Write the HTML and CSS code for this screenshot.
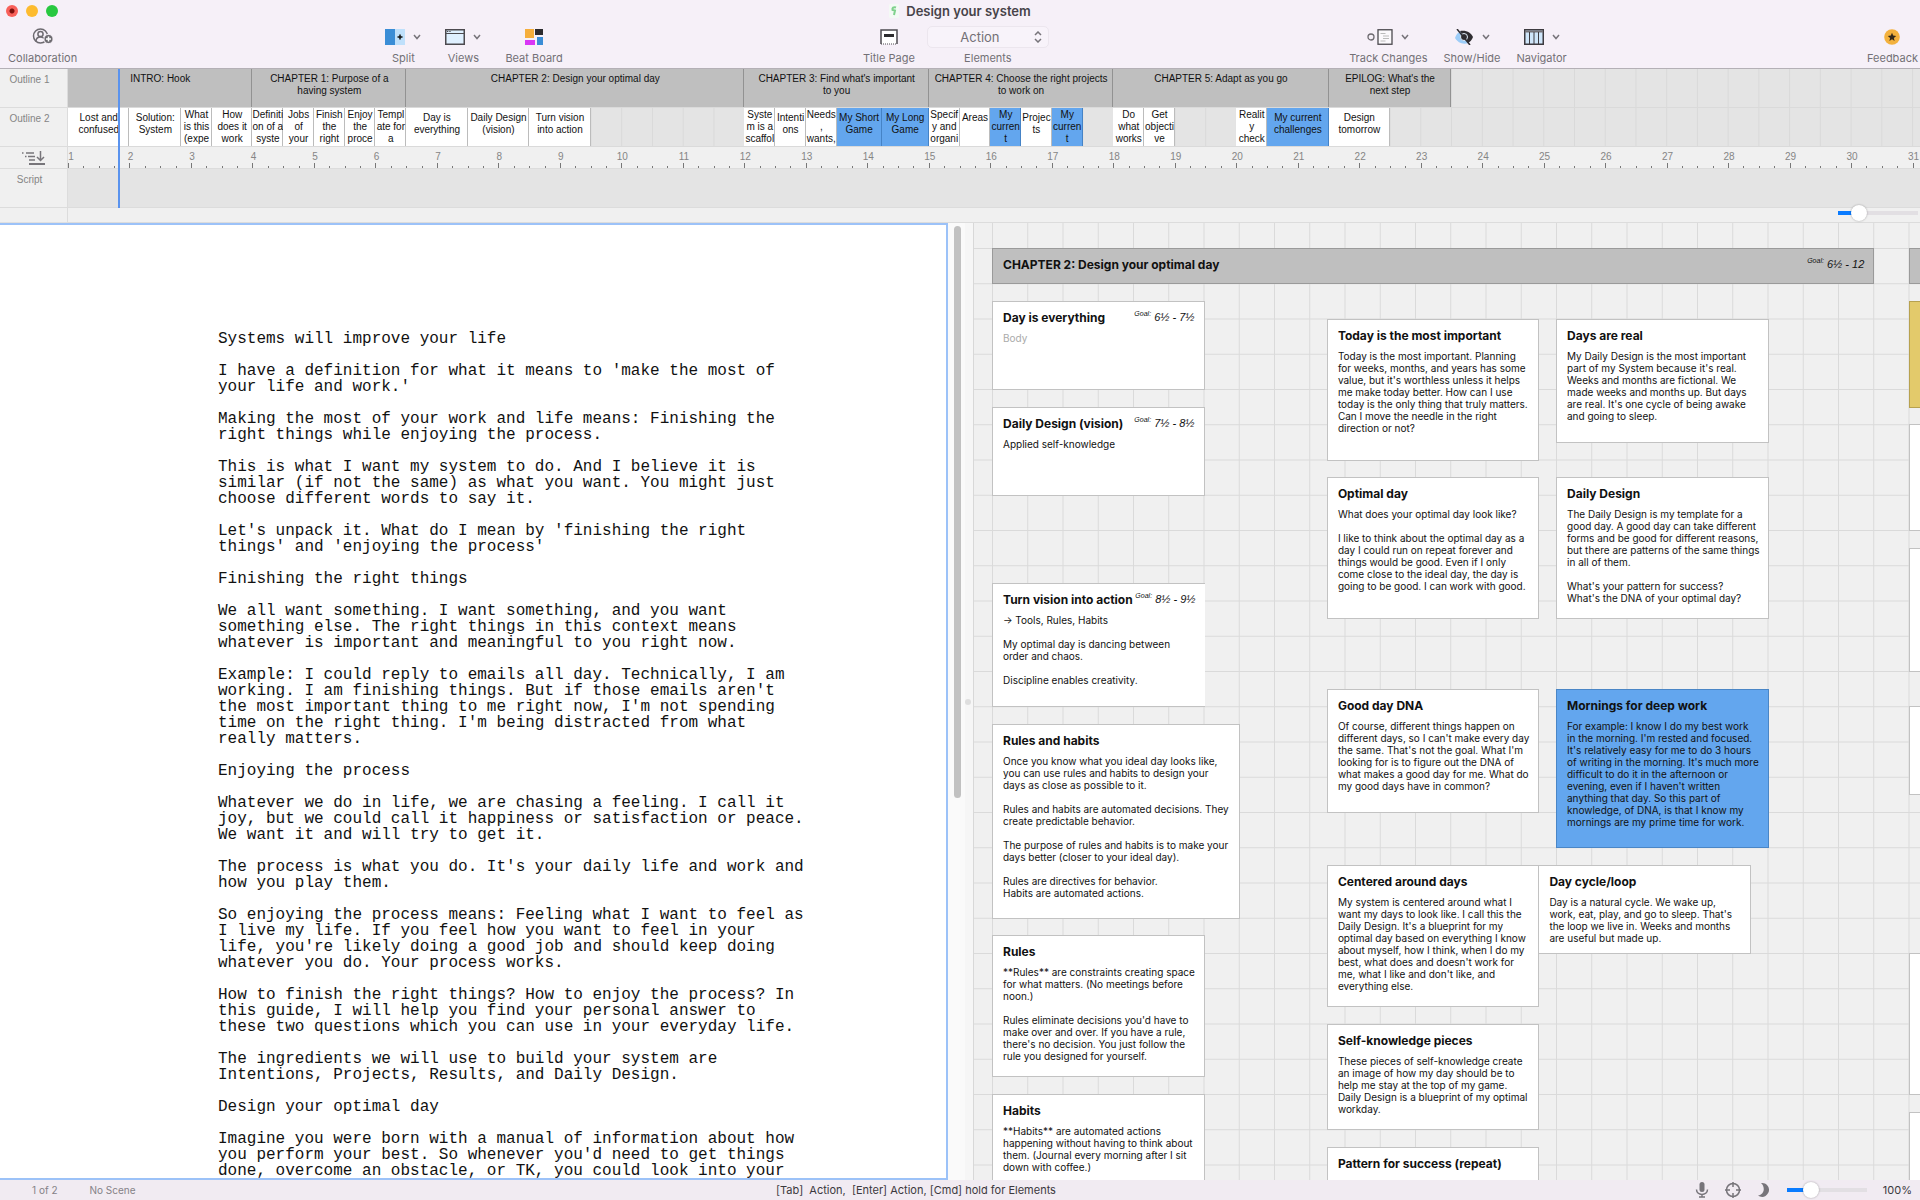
FILE: index.html
```
<!DOCTYPE html>
<html lang="en">
<head>
  <meta charset="utf-8">
  <title>Design your system</title>
  <link rel="stylesheet" href="styles.css">
</head>
<body>
  <header class="toolbar">
    <div class="titlebar">
      <div class="lights">
        <button class="light red" aria-label="Close"></button>
        <button class="light yellow" aria-label="Minimize"></button>
        <button class="light green" aria-label="Zoom"></button>
      </div>
      <svg class="doc-icon" width="10" height="14" viewBox="0 0 10 14"><rect width="10" height="14" rx="1" fill="#f4faf5"/><path d="M7 3.500C4.500 2.500 3 4 3.500 6L6 6.500 5 11" fill="none" stroke="#7fd18c" stroke-width="2"/></svg>
      <h1 class="title">Design your system</h1>
    </div>

    <div class="tools">
      <button class="tool collaboration">
        <span class="tool-icon">
          <svg width="22" height="20" viewBox="0 0 22 20" fill="none" stroke="#6d6a70" stroke-width="1.500"><circle cx="8.500" cy="9" r="7"/><circle cx="8.500" cy="7" r="2.600"/><path d="M4 14.500c0-3 1.800-4.500 4.500-4.500 1.500 0 2.700.5 3.500 1.500"/><circle cx="16.500" cy="12" r="4.600" fill="#6d6a70" stroke="#f6f0f8" stroke-width="1"/><path d="M16.500 9.500v5M14 12h5" stroke="#fff"/></svg>
        </span>
        <span>Collaboration</span>
      </button>

      <div class="tool-group wide">
        <button class="tool">
          <span class="tool-icon">
            <svg width="20" height="16" viewBox="0 0 20 16"><rect width="10" height="16" fill="#3a8dd6"/><rect x="10" width="10" height="16" fill="#bfe0fb"/><path d="M15 5.500v5M12.500 8h5" stroke="#111" stroke-width="1.500"/></svg>
            <svg class="chevron" width="8" height="6" viewBox="0 0 8 6"><path d="M1 1l3 3.500L7 1"/></svg>
          </span>
          <span>Split</span>
        </button>
        <button class="tool">
          <span class="tool-icon">
            <svg width="20" height="16" viewBox="0 0 20 16"><rect x=".75" y=".75" width="18.500" height="14.500" fill="#dff0ff" stroke="#4c4a4f" stroke-width="1.500"/><path d="M1 4.500h18" stroke="#4c4a4f"/><path d="M2 2.500h4" stroke="#4c4a4f" stroke-dasharray="1 .7"/></svg>
            <svg class="chevron" width="8" height="6" viewBox="0 0 8 6"><path d="M1 1l3 3.500L7 1"/></svg>
          </span>
          <span>Views</span>
        </button>
        <button class="tool">
          <span class="tool-icon">
            <svg width="18" height="16" viewBox="0 0 18 16"><rect width="9" height="9" fill="#f5ae3c"/><rect x="10" width="8" height="6" fill="#2c2b2e"/><rect y="11" width="10" height="5" fill="#d936f5"/><rect x="12" y="8" width="6" height="8" fill="#3a8dd6"/></svg>
          </span>
          <span>Beat Board</span>
        </button>
      </div>

      <div class="tool-group narrow">
        <button class="tool">
          <span class="tool-icon">
            <svg width="18" height="16" viewBox="0 0 18 16"><path d="M1 15V1h16v14" fill="#fff" stroke="#4c4a4f" stroke-width="1.500"/><path d="M1 15h16" stroke="#4c4a4f" stroke-dasharray="1 1"/><rect x="4" y="5" width="10" height="3" fill="#2c2b2e"/></svg>
          </span>
          <span>Title Page</span>
        </button>
        <div class="tool">
          <div class="select-wrap">
            <select id="elements" class="elements-select"><option>Action</option></select>
            <svg class="updown" width="8" height="12" viewBox="0 0 8 12"><path d="M1 4l3-3 3 3M1 8l3 3 3-3"/></svg>
          </div>
          <label for="elements">Elements</label>
        </div>
      </div>

      <div class="tool-group">
        <button class="tool">
          <span class="tool-icon">
            <svg width="26" height="16" viewBox="0 0 26 16" fill="none"><rect x="1" y="5" width="6" height="6" rx="3" stroke="#6d6a70" stroke-width="1.300"/><rect x="11" y=".75" width="14" height="14.500" fill="#fbf9fc" stroke="#4c4a4f" stroke-width="1.300"/><path d="M13.500 4.500h5M16 7h6M16 9.500h6M13.500 12h5" stroke="#bbb"/></svg>
            <svg class="chevron" width="8" height="6" viewBox="0 0 8 6"><path d="M1 1l3 3.500L7 1"/></svg>
          </span>
          <span>Track Changes</span>
        </button>
        <button class="tool">
          <span class="tool-icon">
            <svg width="20" height="16" viewBox="0 0 20 16"><path d="M1 9C3 3.500 6 2 10 2l5 12c-7 2-11-.5-14-5z" fill="#9dcdf8"/><path d="M6 2c7-1 11 2 13 6-1 3-3 5-5 6z" fill="#2f2d31"/><circle cx="10" cy="8" r="3.500" fill="#2f2d31" stroke="#e6f2fd" stroke-width="1"/><path d="M3 0l13 16" stroke="#2f2d31" stroke-width="1.500"/></svg>
            <svg class="chevron" width="8" height="6" viewBox="0 0 8 6"><path d="M1 1l3 3.500L7 1"/></svg>
          </span>
          <span>Show/Hide</span>
        </button>
        <button class="tool">
          <span class="tool-icon">
            <svg width="20" height="16" viewBox="0 0 20 16"><rect x=".75" y=".75" width="18.500" height="14.500" fill="#cfe6fa" stroke="#3d3b40" stroke-width="1.500"/><path d="M1 2.500h18" stroke="#77757a" stroke-width="2"/><path d="M5.500 3v12M10 3v12M14.500 3v12" stroke="#3d3b40"/></svg>
            <svg class="chevron" width="8" height="6" viewBox="0 0 8 6"><path d="M1 1l3 3.500L7 1"/></svg>
          </span>
          <span>Navigator</span>
        </button>
      </div>

      <button class="tool">
        <span class="tool-icon">
          <svg width="16" height="16" viewBox="0 0 16 16"><circle cx="8" cy="8" r="7.800" fill="#f3b13d"/><path d="M8 3.800l1.200 2.800 3 .3-2.300 2 .7 3L8 10.300l-2.600 1.600.7-3-2.300-2 3-.3z" fill="#33291a"/></svg>
        </span>
        <span>Feedback</span>
      </button>
    </div>
  </header>

  <section class="timeline">
    <div class="row-label">Outline 1</div>
    <div class="track lanes">
      <div class="chapter" style="flex-grow: 3">INTRO: Hook</div>
      <div class="chapter" style="flex-grow: 2.5">CHAPTER 1: Purpose of a<br>having system</div>
      <div class="chapter" style="flex-grow: 5.5">CHAPTER 2: Design your optimal day</div>
      <div class="chapter" style="flex-grow: 3">CHAPTER 3: Find what's important<br>to you</div>
      <div class="chapter" style="flex-grow: 3">CHAPTER 4: Choose the right projects<br>to work on</div>
      <div class="chapter" style="flex-grow: 3.5">CHAPTER 5: Adapt as you go</div>
      <div class="chapter" style="flex-grow: 2">EPILOG: What's the<br>next step</div>
      <div class="empty" style="flex-grow: 7.62"></div>
    </div>

    <div class="row-label">Outline 2</div>
    <div class="track lanes">
      <div class="beat" style="flex-grow: 1">Lost and<br>confused</div>
      <div class="beat" style="flex-grow: 0.84">Solution:<br>System</div>
      <div class="beat tall" style="flex-grow: 0.5">What<br>is this<br>(expe</div>
      <div class="beat tall" style="flex-grow: 0.66">How<br>does it<br>work</div>
      <div class="beat tall" style="flex-grow: 0.5">Definiti<br>on of a<br>syste</div>
      <div class="beat tall" style="flex-grow: 0.5">Jobs<br>of<br>your</div>
      <div class="beat tall" style="flex-grow: 0.5">Finish<br>the<br>right</div>
      <div class="beat tall" style="flex-grow: 0.5">Enjoy<br>the<br>proce</div>
      <div class="beat tall" style="flex-grow: 0.5">Templ<br>ate for<br>a</div>
      <div class="beat" style="flex-grow: 1">Day is<br>everything</div>
      <div class="beat" style="flex-grow: 1">Daily Design<br>(vision)</div>
      <div class="beat" style="flex-grow: 1">Turn vision<br>into action</div>
      <div class="empty" style="flex-grow: 2.5"></div>
      <div class="beat tall" style="flex-grow: 0.5">Syste<br>m is a<br>scaffol</div>
      <div class="beat" style="flex-grow: 0.5">Intenti<br>ons</div>
      <div class="beat tall" style="flex-grow: 0.5">Needs<br>,<br>wants,</div>
      <div class="beat blue" style="flex-grow: 0.73">My Short<br>Game</div>
      <div class="beat blue" style="flex-grow: 0.77">My Long<br>Game</div>
      <div class="beat tall" style="flex-grow: 0.5">Specif<br>y and<br>organi</div>
      <div class="beat" style="flex-grow: 0.5">Areas</div>
      <div class="beat tall blue" style="flex-grow: 0.5">My<br>curren<br>t</div>
      <div class="beat" style="flex-grow: 0.5">Projec<br>ts</div>
      <div class="beat tall blue" style="flex-grow: 0.5">My<br>curren<br>t</div>
      <div class="empty" style="flex-grow: 0.5"></div>
      <div class="beat tall" style="flex-grow: 0.5">Do<br>what<br>works</div>
      <div class="beat tall" style="flex-grow: 0.5">Get<br>objecti<br>ve</div>
      <div class="empty" style="flex-grow: 1"></div>
      <div class="beat tall" style="flex-grow: 0.5">Realit<br>y<br>check</div>
      <div class="beat blue" style="flex-grow: 1">My current<br>challenges</div>
      <div class="beat" style="flex-grow: 1">Design<br>tomorrow</div>
      <div class="empty" style="flex-grow: 8.62"></div>
    </div>

    <div class="row-label icon-label">
      <svg width="24" height="16" viewBox="0 0 24 16" fill="none" stroke="#77757a" stroke-width="1.500"><path d="M0 3h1.500M4 3h8M3 6.500h1.500M6 6.500h7M7 10h6"/><path d="M18.500 1v9M15 7l3.500 3.500L22 7"/><path d="M7 14h16" stroke-width="2"/></svg>
    </div>
    <div class="track ruler" id="ruler"></div>

    <div class="row-label">Script</div>
    <div class="track script-track"></div>

    <div class="row-label last"></div>
    <div class="zoom-strip">
      <input class="slider" type="range" min="0" max="100" value="20" aria-label="Timeline zoom">
    </div>
    <div class="playhead"></div>
  </section>

  <main class="workspace">
    <article class="script">
      <p>Systems will improve your life</p>
      <p>I have a definition for what it means to 'make the most of<br>your life and work.'</p>
      <p>Making the most of your work and life means: Finishing the<br>right things while enjoying the process.</p>
      <p>This is what I want my system to do. And I believe it is<br>similar (if not the same) as what you want. You might just<br>choose different words to say it.</p>
      <p>Let's unpack it. What do I mean by 'finishing the right<br>things' and 'enjoying the process'</p>
      <p>Finishing the right things</p>
      <p>We all want something. I want something, and you want<br>something else. The right things in this context means<br>whatever is important and meaningful to you right now.</p>
      <p>Example: I could reply to emails all day. Technically, I am<br>working. I am finishing things. But if those emails aren't<br>the most important thing to me right now, I'm not spending<br>time on the right thing. I'm being distracted from what<br>really matters.</p>
      <p>Enjoying the process</p>
      <p>Whatever we do in life, we are chasing a feeling. I call it<br>joy, but we could call it happiness or satisfaction or peace.<br>We want it and will try to get it.</p>
      <p>The process is what you do. It's your daily life and work and<br>how you play them.</p>
      <p>So enjoying the process means: Feeling what I want to feel as<br>I live my life. If you feel how you want to feel in your<br>life, you're likely doing a good job and should keep doing<br>whatever you do. Your process works.</p>
      <p>How to finish the right things? How to enjoy the process? In<br>this guide, I will help you find your personal answer to<br>these two questions which you can use in your everyday life.</p>
      <p>The ingredients we will use to build your system are<br>Intentions, Projects, Results, and Daily Design.</p>
      <p>Design your optimal day</p>
      <p>Imagine you were born with a manual of information about how<br>you perform your best. So whenever you'd need to get things<br>done, overcome an obstacle, or TK, you could look into your</p>
    </article>
    <div class="scrollbar"><div class="thumb"></div></div>
    <div class="splitter"><span class="grip"></span></div>

    <!-- --x, --y, --w, --h are in board cells -->
    <section class="board">
      <div class="canvas">
        <div class="card heading" style="--x:0; --y:0; --w:25; --h:1">
          <div class="card-head"><h2>CHAPTER 2: Design your optimal day</h2><span class="goal"><sup>Goal:</sup> 6½ - 12</span></div>
        </div>
        <div class="card" style="--x:0; --y:1.5; --w:6; --h:2.5">
          <div class="card-head"><h2>Day is everything</h2><span class="goal"><sup>Goal:</sup> 6½ - 7½</span></div>
          <p class="placeholder">Body</p>
        </div>
        <div class="card" style="--x:0; --y:4.5; --w:6; --h:2.5">
          <div class="card-head"><h2>Daily Design (vision)</h2><span class="goal"><sup>Goal:</sup> 7½ - 8½</span></div>
          <p>Applied self-knowledge</p>
        </div>
        <div class="card open" style="--x:0; --y:9.5; --w:6; --h:3.5">
          <div class="card-head"><h2>Turn vision into action</h2><span class="goal"><sup>Goal:</sup> 8½ - 9½</span></div>
          <p>→ Tools, Rules, Habits<br><br>My optimal day is dancing between<br>order and chaos.<br><br>Discipline enables creativity.</p>
        </div>
        <div class="card" style="--x:0; --y:13.5; --w:7; --h:5.5">
          <h2>Rules and habits</h2>
          <p>Once you know what you ideal day looks like,<br>you can use rules and habits to design your<br>days as close as possible to it.<br><br>Rules and habits are automated decisions. They<br>create predictable behavior.<br><br>The purpose of rules and habits is to make your<br>days better (closer to your ideal day).<br><br>Rules are directives for behavior.<br>Habits are automated actions.</p>
        </div>
        <div class="card" style="--x:0; --y:19.5; --w:6; --h:4">
          <h2>Rules</h2>
          <p>**Rules** are constraints creating space<br>for what matters. (No meetings before<br>noon.)<br><br>Rules eliminate decisions you'd have to<br>make over and over. If you have a rule,<br>there's no decision. You just follow the<br>rule you designed for yourself.</p>
        </div>
        <div class="card" style="--x:0; --y:24; --w:6; --h:3.5">
          <h2>Habits</h2>
          <p>**Habits** are automated actions<br>happening without having to think about<br>them. (Journal every morning after I sit<br>down with coffee.)</p>
        </div>

        <div class="card" style="--x:9.5; --y:2; --w:6; --h:4">
          <h2>Today is the most important</h2>
          <p>Today is the most important. Planning<br>for weeks, months, and years has some<br>value, but it's worthless unless it helps<br>me make today better. How can I use<br>today is the only thing that truly matters.<br>Can I move the needle in the right<br>direction or not?</p>
        </div>
        <div class="card" style="--x:16; --y:2; --w:6; --h:3.5">
          <h2>Days are real</h2>
          <p>My Daily Design is the most important<br>part of my System because it's real.<br>Weeks and months are fictional. We<br>made weeks and months up. But days<br>are real. It's one cycle of being awake<br>and going to sleep.</p>
        </div>
        <div class="card" style="--x:9.5; --y:6.5; --w:6; --h:4">
          <h2>Optimal day</h2>
          <p>What does your optimal day look like?<br><br>I like to think about the optimal day as a<br>day I could run on repeat forever and<br>things would be good. Even if I only<br>come close to the ideal day, the day is<br>going to be good. I can work with good.</p>
        </div>
        <div class="card" style="--x:16; --y:6.5; --w:6; --h:4">
          <h2>Daily Design</h2>
          <p>The Daily Design is my template for a<br>good day. A good day can take different<br>forms and be good for different reasons,<br>but there are patterns of the same things<br>in all of them.<br><br>What's your pattern for success?<br>What's the DNA of your optimal day?</p>
        </div>
        <div class="card" style="--x:9.5; --y:12.5; --w:6; --h:3.5">
          <h2>Good day DNA</h2>
          <p>Of course, different things happen on<br>different days, so I can't make every day<br>the same. That's not the goal. What I'm<br>looking for is to figure out the DNA of<br>what makes a good day for me. What do<br>my good days have in common?</p>
        </div>
        <div class="card blue" style="--x:16; --y:12.5; --w:6; --h:4.5">
          <h2>Mornings for deep work</h2>
          <p>For example: I know I do my best work<br>in the morning. I'm rested and focused.<br>It's relatively easy for me to do 3 hours<br>of writing in the morning. It's much more<br>difficult to do it in the afternoon or<br>evening, even if I haven't written<br>anything that day. So this part of<br>knowledge, of DNA, is that I know my<br>mornings are my prime time for work.</p>
        </div>
        <div class="card" style="--x:9.5; --y:17.5; --w:6; --h:4">
          <h2>Centered around days</h2>
          <p>My system is centered around what I<br>want my days to look like. I call this the<br>Daily Design. It's a blueprint for my<br>optimal day based on everything I know<br>about myself, how I think, when I do my<br>best, what does and doesn't work for<br>me, what I like and don't like, and<br>everything else.</p>
        </div>
        <div class="card" style="--x:15.5; --y:17.5; --w:6; --h:2.5">
          <h2>Day cycle/loop</h2>
          <p>Day is a natural cycle. We wake up,<br>work, eat, play, and go to sleep. That's<br>the loop we live in. Weeks and months<br>are useful but made up.</p>
        </div>
        <div class="card" style="--x:9.5; --y:22; --w:6; --h:3">
          <h2>Self-knowledge pieces</h2>
          <p>These pieces of self-knowledge create<br>an image of how my day should be to<br>help me stay at the top of my game.<br>Daily Design is a blueprint of my optimal<br>workday.</p>
        </div>
        <div class="card" style="--x:9.5; --y:25.5; --w:6; --h:3.5">
          <h2>Pattern for success (repeat)</h2>
        </div>

        <!-- next chapter, cut off by the window edge -->
        <div class="card heading" style="--x:26; --y:0; --w:25; --h:1"></div>
        <div class="card gold" style="--x:26; --y:1.5; --w:6; --h:3"></div>
        <div class="card" style="--x:26; --y:5; --w:6; --h:3"></div>
        <div class="card" style="--x:26; --y:8.5; --w:6; --h:3.5"></div>
        <div class="card" style="--x:26; --y:13; --w:6; --h:2.5"></div>
        <div class="card" style="--x:26; --y:20; --w:6; --h:4"></div>
        <div class="card" style="--x:26; --y:24.5; --w:6; --h:4"></div>
      </div>
    </section>
  </main>

  <footer class="statusbar">
    <div class="status-left"><span>1 of 2</span><span>No Scene</span></div>
    <div class="status-hint">[Tab]&nbsp; Action,&nbsp; [Enter] Action, [Cmd] hold for Elements</div>
    <div class="status-right">
      <button class="status-button" aria-label="Dictation"><svg width="14" height="16" viewBox="0 0 14 16" fill="none" stroke="#77747a" stroke-width="1.500"><rect x="4.500" y="0" width="5" height="10" rx="2.500" fill="#77747a" stroke="none"/><path d="M1.500 7.500c0 6.500 11 6.500 11 0M7 12.500V15M4 15h6"/></svg></button>
      <button class="status-button" aria-label="Focus"><svg width="16" height="16" viewBox="0 0 16 16" fill="none" stroke="#77747a" stroke-width="1.500"><circle cx="8" cy="8" r="6.500"/><path d="M8 0v5M8 11v5M0 8h5M11 8h5"/></svg></button>
      <button class="status-button" aria-label="Night mode"><svg width="14" height="16" viewBox="0 0 14 16"><path d="M4 1c8-1 11 9 4.500 13-2.500 1.500-5.500 1-7.500-.5C7.500 12.500 8.500 5 4 1z" fill="#77747a"/></svg></button>
      <input class="slider" type="range" min="0" max="100" value="25" aria-label="Page zoom">
      <span class="zoom-value">100%</span>
    </div>
  </footer>

  <script>
    // Ruler: one unit per page, four ticks in each
    const ruler = document.getElementById('ruler');
    for (let page = 1; page <= 31; page++) {
      const unit = document.createElement('div');
      unit.className = 'unit';
      unit.style.flexGrow = page === 31 ? 0.12 : 1;
      let ticks = '<i class="tick major"></i>';
      if (page < 31) {
        ticks += '<i class="tick"></i>'.repeat(3);
      }
      unit.innerHTML = '<span class="number">' + page + '</span><div class="ticks">' + ticks + '</div>';
      ruler.appendChild(unit);
    }
  </script>
</body>
</html>
```
FILE: styles.css
```
* {
  box-sizing: border-box;
}

body {
  margin: 0;
  height: 100vh;
  display: flex;
  flex-direction: column;
  overflow: hidden;
  font-family: Inter, sans-serif;
  font-size: 11px;
  background-color: #f0f0f0;
  color: #111;
}

button {
  padding: 0;
  border: none;
  background: none;
  font: inherit;
  color: inherit;
}

h1, h2, p {
  margin: 0;
}

svg {
  display: block;
}

/* Toolbar */
.toolbar {
  background-color: #f6f0f8;
  border-bottom: 1px solid #b4b0b6;
  padding-bottom: 3px;
}

.titlebar {
  height: 22px;
  display: flex;
  align-items: center;
  justify-content: center;
  gap: 7px;
  position: relative;
}

.lights {
  position: absolute;
  left: 6px;
  top: 5px;
  display: flex;
  gap: 8px;
}

.light {
  width: 12px;
  height: 12px;
  border-radius: 50%;
}

.red {
  background: radial-gradient(circle, #7c0f0c 2px, #f8605a 3px);
}

.yellow {
  background-color: #fdbb2f;
}

.green {
  background-color: #28c840;
}

.title {
  font-size: 13px;
  line-height: 16px;
  font-weight: 600;
  color: #474349;
}

.tools {
  display: flex;
  justify-content: space-between;
  padding: 4px 2px 0 8px;
}

.tool-group {
  display: flex;
  gap: 16px;
}

.tool-group.wide {
  gap: 24px;
}

.tool-group.narrow {
  gap: 12px;
}

.collaboration {
  margin-right: 8px;
}

.tool {
  display: flex;
  flex-direction: column;
  align-items: center;
  gap: 3px;
  line-height: 14px;
  color: #737076;
}

.tool-icon {
  height: 22px;
  display: flex;
  align-items: center;
  gap: 8px;
}

.chevron, .updown {
  fill: none;
  stroke: #77747a;
  stroke-width: 1.5px;
}

.select-wrap {
  position: relative;
}

.elements-select {
  appearance: none;
  display: block;
  width: 122px;
  height: 22px;
  border: 1px solid #ece6ee;
  border-radius: 5px;
  background-color: #f8f3fa;
  padding: 0 16px 0 0;
  font: 13px Inter, sans-serif;
  color: #737076;
  text-align: center;
  text-align-last: center;
}

.updown {
  position: absolute;
  right: 7px;
  top: 5px;
}

/* Timeline */
.timeline {
  display: grid;
  grid-template-columns: 68px 1fr;
  grid-template-rows: 39px 39px 22px 39px 15px;
  position: relative;
  font-family: "Liberation Sans", sans-serif;
  font-size: 10px;
  line-height: 12px;
}

.row-label {
  padding: 5px 8px 0 0;
  text-align: center;
  color: #858585;
  background-color: #f0f0f0;
  border-right: 1px solid #dcdcdc;
  border-bottom: 1px solid #dcdcdc;
}

.icon-label {
  display: flex;
  justify-content: center;
  padding: 3px 0 0;
}

.last {
  border-bottom-color: #e0e0e0;
}

.track {
  min-width: 0;
  overflow: hidden;
  background-color: #e4e4e4;
}

.lanes {
  display: flex;
  border-bottom: 1px solid #dadada;
  background-image: linear-gradient(90deg, #d9d9d9 1px, transparent 1px);
  background-size: calc(100% / 60.24) 100%;
}

.chapter, .beat, .empty {
  flex: 1 1 0;
  min-width: 0;
  overflow: hidden;
  white-space: nowrap;
}

/* dividers are inset shadows so they take no width from the scale */
.chapter, .beat {
  display: flex;
  justify-content: center;
  text-align: center;
  padding-top: 4px;
  box-shadow: inset -1px 0 #bcbcbc;
}

.chapter {
  margin-bottom: -1px;
  background-color: #bfbfbf;
  box-shadow: inset -1px 0 #929292;
}

.beat {
  background-color: #fff;
}

.tall {
  padding-top: 1px;
}

.beat.blue {
  background-color: #63a6ee;
  box-shadow: inset -1px 0 #4583c6;
}

.ruler {
  display: flex;
  background-color: #f0f0f0;
  border-bottom: 1px solid #dcdcdc;
}

.unit {
  flex: 1 1 0;
  min-width: 0;
  display: flex;
  flex-direction: column;
  justify-content: space-between;
}

.number {
  width: 24px;
  margin: 4px 0 0 -11px;
  text-align: center;
  color: #858585;
}

.unit:first-child .number {
  margin-left: -9px;
}

.ticks {
  display: flex;
  align-items: flex-end;
  height: 6px;
}

.tick {
  flex: 1;
  height: 3px;
  border-left: 1px solid #777;
}

.major {
  height: 6px;
}

.script-track {
  border-bottom: 1px solid #dcdcdc;
}

.zoom-strip {
  display: flex;
  align-items: center;
  justify-content: flex-end;
  padding: 0 2px 4px 0;
  border-bottom: 1px solid #dcdcdc;
}

.playhead {
  position: absolute;
  left: 118px;
  top: 0;
  bottom: 15px;
  width: 2px;
  background-color: #5a93ee;
}

.slider {
  appearance: none;
  width: 80px;
  height: 16px;
  margin: 0;
  background: linear-gradient(90deg, #0a7bff 25%, #e2dfe3 25%) center / 100% 4px no-repeat;
}

.slider::-webkit-slider-thumb {
  appearance: none;
  width: 16px;
  height: 16px;
  border-radius: 50%;
  background-color: #fff;
  box-shadow: 0 0 2px rgba(0, 0, 0, 0.35);
}

/* Script pane */
.workspace {
  flex: 1;
  min-height: 0;
  display: flex;
}

.script {
  flex: 1;
  min-width: 0;
  overflow: hidden;
  padding: 106px 0 0 218px;
  background-color: #fff;
  border: 2px solid #9cc2f8;
  border-left: none;
  font-family: "Liberation Mono", monospace;
  font-size: 16px;
  line-height: 16px;
  white-space: nowrap;
}

.script p {
  margin-bottom: 16px;
}

.scrollbar {
  width: 17px;
  padding: 3px 4px 0 6px;
  background-color: #fafafa;
}

.thumb {
  width: 7px;
  height: 60%;
  border-radius: 4px;
  background-color: #c1c1c1;
}

.splitter {
  width: 9px;
  display: flex;
  align-items: center;
  background-color: #f6f6f6;
  border-right: 1px solid #d8d8d8;
}

.grip {
  width: 6px;
  height: 6px;
  border-radius: 50%;
  background-color: #dedede;
}

/* Beat board */
.board {
  --cell: calc(141px / 4);
  width: 946px;
  overflow: hidden;
  background-color: #f0f0f0;
  background-image:
    linear-gradient(90deg, #dadada 1px, transparent 1px),
    linear-gradient(#dadada 1px, transparent 1px);
  background-size: var(--cell) var(--cell);
  background-position: 18px 25px;
}

.canvas {
  position: relative;
  margin: 25px 0 0 18px;
}

.card {
  position: absolute;
  left: calc(var(--x) * var(--cell));
  top: calc(var(--y) * var(--cell));
  width: calc(var(--w) * var(--cell) + 1px);
  height: calc(var(--h) * var(--cell) + 1px);
  padding: 8px 9px 0 10px;
  background-color: #fff;
  border: 1px solid #c2c2c2;
  font-size: 10px;
  line-height: 12px;
  white-space: nowrap;
}

.card h2 {
  font-size: 12px;
  line-height: 16px;
  font-weight: 700;
}

.card p {
  margin-top: 6px;
}

.card .placeholder {
  color: #aaa;
}

.card-head {
  display: flex;
  justify-content: space-between;
}

.goal {
  font-family: "Liberation Sans", sans-serif;
  font-size: 11px;
  line-height: 12px;
  font-style: italic;
}

.goal sup {
  font-size: 7px;
  line-height: 1;
}

.heading {
  background-color: #bfbfbf;
  border-color: #9a9a9a;
}

.open {
  border-right: none;
}

.card.blue {
  background-color: #63a6ee;
  border-color: #4a86c6;
}

.gold {
  background-color: #e3ca6b;
  border-color: #b7a14f;
}

/* Status bar */
.statusbar {
  height: 20px;
  display: grid;
  grid-template-columns: 1fr auto 1fr;
  align-items: center;
  background-color: #f1ebf2;
}

.status-left {
  display: flex;
  gap: 32px;
  padding-left: 32px;
  font-size: 10px;
  color: #858287;
}

.status-hint {
  padding-right: 88px;
  color: #3c393e;
}

.status-right {
  display: flex;
  align-items: center;
  justify-content: flex-end;
  gap: 16px;
  padding-right: 8px;
}

.zoom-value {
  color: #3c393e;
}
```
